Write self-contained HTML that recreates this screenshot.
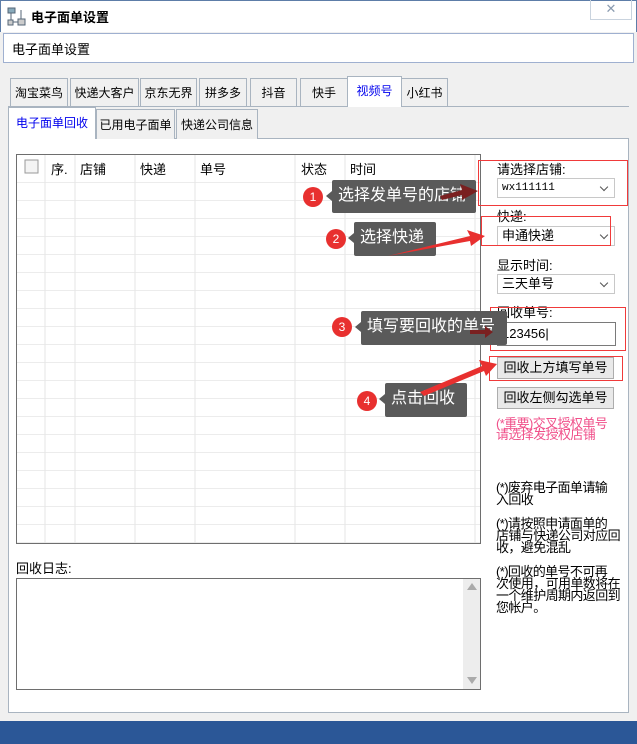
<!DOCTYPE html>
<html><head><meta charset="utf-8"><style>
*{margin:0;padding:0;box-sizing:border-box}
body{width:637px;height:744px;position:relative;background:#f0f0f0;font-family:"Liberation Sans","Noto Sans CJK SC",sans-serif;font-size:12px;color:#000;overflow:hidden}
.a{position:absolute;white-space:nowrap}
.tab{position:absolute;top:78px;height:28px;border:1px solid #a9b4c0;border-bottom:none;background:#f0f0f0;text-align:center;line-height:28px;font-size:12px;white-space:nowrap}
.st{position:absolute;height:30px;border:1px solid #a9b4c0;border-bottom:none;background:#f0f0f0;text-align:center;line-height:30px;font-size:12px;white-space:nowrap}
.combo{position:absolute;left:497px;width:118px;height:20px;border:1px solid #c8c8c8;background:#fff;line-height:18px;padding-left:4px;font-size:13px}
.combo:after{content:"";position:absolute;right:7px;top:5px;width:5px;height:5px;border-right:1px solid #555;border-bottom:1px solid #555;transform:rotate(45deg)}
.red{position:absolute;border:1px solid #f03a3a}
.btn{position:absolute;left:497px;width:117px;height:22px;border:1px solid #adadad;background:#e9e9e9;text-align:center;line-height:20px;font-size:13px}
.call{position:absolute;background:#5a5a5a;color:#fff;font-size:16px;line-height:32px;padding-left:6px;border-radius:2px;white-space:nowrap}
.call:before{content:"";position:absolute;left:-6px;top:11px;border:5px solid transparent;border-right:6px solid #5a5a5a;border-left:none}
.num{position:absolute;width:20px;height:20px;border-radius:50%;background:#e8302f;color:#fff;text-align:center;line-height:20px;font-size:12px}
.note{position:absolute;left:496px;font-size:13px;line-height:12px;letter-spacing:-0.6px;white-space:nowrap}
.lbl{position:absolute;left:497px;font-size:13px}
</style></head><body>
<div class="a" style="left:0;top:0;width:637px;height:32px;background:#fff;border:1px solid #5d7da8;border-bottom:none"></div>
<svg class="a" style="left:7px;top:7px" width="20" height="20"><rect x="1" y="1" width="7" height="5" fill="#8ab" stroke="#567"/><rect x="11" y="12" width="7" height="6" fill="#ccc" stroke="#567"/><path d="M4 6v9h7M14 3v9" stroke="#567" fill="none"/><rect x="1" y="13" width="5" height="5" fill="#ccc" stroke="#567"/></svg>
<div class="a" style="left:31px;top:7px;font-weight:bold;font-size:13px">电子面单设置</div>
<div class="a" style="left:590px;top:0;width:42px;height:20px;border:1px solid #c9d3de;border-top:none;color:#8a9bb0;text-align:center;line-height:18px;font-size:13px">✕</div>
<div class="a" style="left:3px;top:33px;width:631px;height:30px;background:#fff;border:1px solid #9fb0d0;padding:5px 0 0 8px;font-size:13px">电子面单设置</div>
<div class="tab" style="left:10px;width:58px">淘宝菜鸟</div>
<div class="tab" style="left:70px;width:69px">快递大客户</div>
<div class="tab" style="left:140px;width:57px">京东无界</div>
<div class="tab" style="left:199px;width:48px">拼多多</div>
<div class="tab" style="left:250px;width:47px">抖音</div>
<div class="tab" style="left:300px;width:48px">快手</div>
<div class="tab" style="left:347px;top:76px;height:31px;width:55px;background:#fff;color:#0000ee;z-index:2">视频号</div>
<div class="tab" style="left:401px;width:47px">小红书</div>
<div class="a" style="left:8px;top:106px;width:621px;height:1px;background:#a9b4c0"></div>
<div class="a" style="left:8px;top:138px;width:621px;height:575px;background:#fff;border:1px solid #a9b4c0"></div>
<div class="st" style="left:8px;top:107px;width:88px;height:32px;background:#fff;color:#0000ee;z-index:2">电子面单回收</div>
<div class="st" style="left:96px;top:109px;width:79px">已用电子面单</div>
<div class="st" style="left:176px;top:109px;width:82px">快递公司信息</div>
<div class="a" style="left:16px;top:154px;width:465px;height:390px;border:1px solid #6e6e6e;background:#fff;
background-image:linear-gradient(#ececec 1px,transparent 1px);background-size:100% 18px;background-position:0 27px"></div>
<svg class="a" style="left:17px;top:155px" width="463" height="388">
<rect x="0" y="0" width="463" height="24" fill="#fff"/>
<g stroke="#e6e6e6"><path d="M28 0v388M58 0v388M118 0v388M178 0v388M278 0v388M328 0v388M458 0v388"/></g>
<rect x="8" y="5" width="13" height="13" fill="#f4f4f4" stroke="#999"/>
</svg>
<div class="a" style="left:51px;top:159px;font-size:13px">序.</div><div class="a" style="left:80px;top:159px;font-size:13px">店铺</div><div class="a" style="left:140px;top:159px;font-size:13px">快递</div><div class="a" style="left:200px;top:159px;font-size:13px">单号</div><div class="a" style="left:301px;top:159px;font-size:13px">状态</div><div class="a" style="left:350px;top:159px;font-size:13px">时间</div>
<div class="a" style="left:16px;top:558px;font-size:13px">回收日志:</div>
<div class="a" style="left:16px;top:578px;width:465px;height:112px;border:1px solid #6e6e6e;background:#fff"></div>
<div class="a" style="left:463px;top:579px;width:17px;height:110px;background:#ededed"></div>
<div class="a" style="left:467px;top:583px;border:5px solid transparent;border-bottom:7px solid #aaa;border-top:none"></div>
<div class="a" style="left:467px;top:677px;border:5px solid transparent;border-top:7px solid #aaa;border-bottom:none"></div>
<div class="lbl" style="top:159px">请选择店铺:</div>
<div class="combo" style="top:178px;font-family:'Liberation Mono',monospace;font-size:11px">wx111111</div>
<div class="lbl" style="top:206px">快递:</div>
<div class="combo" style="top:226px">申通快递</div>
<div class="lbl" style="top:255px">显示时间:</div>
<div class="combo" style="top:274px">三天单号</div>
<div class="lbl" style="top:302px">回收单号:</div>
<div class="a" style="left:497px;top:322px;width:119px;height:24px;border:1px solid #7a7a7a;background:#fff;line-height:22px;padding-left:4px;font-size:13px">123456|</div>
<div class="btn" style="top:357px">回收上方填写单号</div>
<div class="btn" style="top:387px">回收左侧勾选单号</div>
<div class="note" style="top:418px;color:#f0508a;line-height:11px">(*重要)交叉授权单号<br>请选择发授权店铺</div>
<div class="note" style="top:482px">(*)废弃电子面单请输<br>入回收</div>
<div class="note" style="top:518px">(*)请按照申请面单的<br>店铺与快递公司对应回<br>收，避免混乱</div>
<div class="note" style="top:566px">(*)回收的单号不可再<br>次使用，可用单数将在<br>一个维护周期内返回到<br>您帐户。</div>
<div class="red" style="left:478px;top:160px;width:150px;height:46px"></div>
<div class="red" style="left:481px;top:216px;width:130px;height:30px"></div>
<div class="red" style="left:490px;top:307px;width:136px;height:44px"></div>
<div class="red" style="left:489px;top:356px;width:134px;height:25px"></div>
<div class="call" style="left:332px;top:180px;width:144px;height:33px">选择发单号的店铺</div>
<div class="call" style="left:354px;top:222px;width:82px;height:34px">选择快递</div>
<div class="call" style="left:361px;top:311px;width:146px;height:34px">填写要回收的单号</div>
<div class="call" style="left:385px;top:383px;width:82px;height:34px">点击回收</div>
<div class="num" style="left:303px;top:187px">1</div>
<div class="num" style="left:326px;top:229px">2</div>
<div class="num" style="left:332px;top:317px">3</div>
<div class="num" style="left:357px;top:391px">4</div>
<svg class="a" style="left:0;top:0" width="637" height="744">
<g fill="#e8302f">
<path d="M440 196 L462 190 L460 184 L478 191 L462 200 L462 195 L442 200Z" fill="#7a2020"/>
<path d="M388 256 L470 236 L467 230 L485 236 L471 246 L470 241Z"/>
<path d="M470 330 L485 330 L485 326 L493 332 L485 338 L485 334 L470 334Z" fill="#7a2020"/>
<path d="M420 392 L482 366 L479 360 L497 364 L486 376 L484 371 L424 396Z"/>
</g></svg>
<div class="a" style="left:0;top:721px;width:637px;height:23px;background:#2b5797"></div>
</body></html>
